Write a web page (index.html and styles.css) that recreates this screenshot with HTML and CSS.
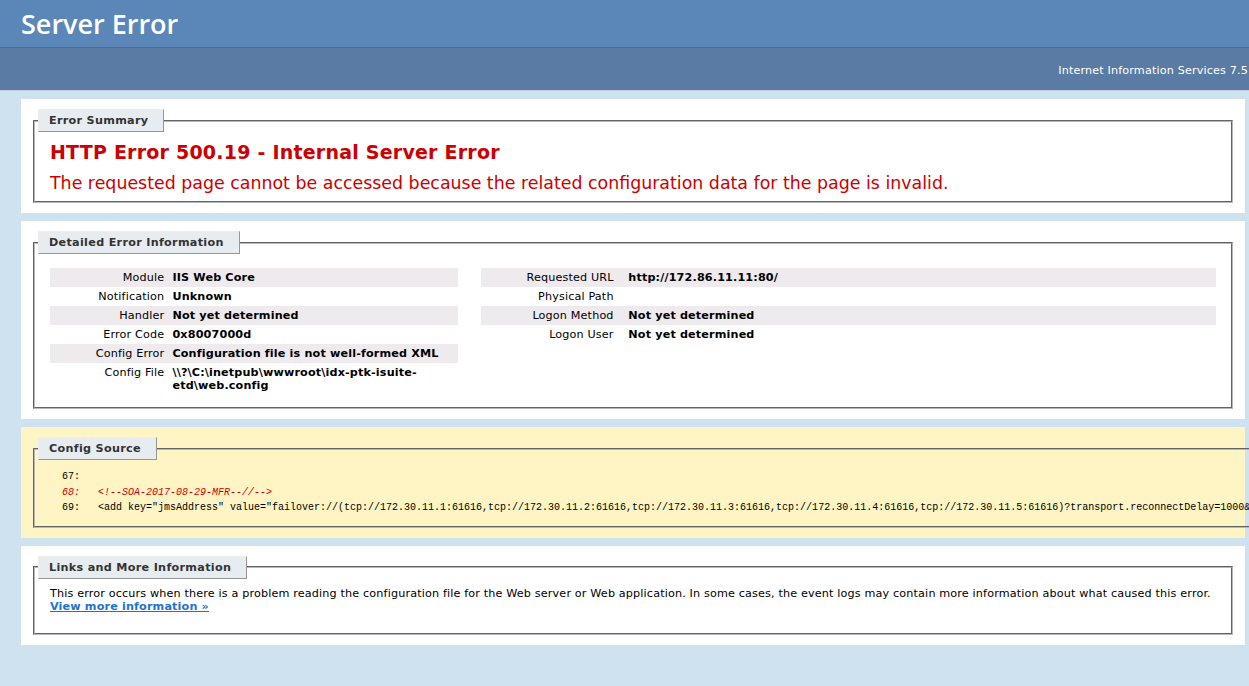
FILE: index.html
```html
<!DOCTYPE html>
<html lang="en">
<head>
<meta charset="utf-8">
<title>IIS 7.5 Detailed Error - 500.19 - Internal Server Error</title>
<link rel="stylesheet" href="styles.css">
</head>
<body>
<div class="header"><h1 class="title">Server Error</h1></div>
<div class="server-version"><p>Internet Information Services 7.5</p></div>
<div class="content">
  <div class="container summary">
    <fieldset class="box">
      <legend class="legend">Error Summary</legend>
      <h2 class="err-title">HTTP Error 500.19 - Internal Server Error</h2>
      <h3 class="err-sub">The requested page cannot be accessed because the related configuration data for the page is invalid.</h3>
    </fieldset>
  </div>

  <div class="container">
    <fieldset class="box">
      <legend class="legend">Detailed Error Information</legend>
      <div class="details">
        <div class="details-left">
          <table class="info">
            <tr class="alt"><th>Module</th><td>IIS Web Core</td></tr>
            <tr><th>Notification</th><td>Unknown</td></tr>
            <tr class="alt"><th>Handler</th><td>Not yet determined</td></tr>
            <tr><th>Error Code</th><td>0x8007000d</td></tr>
            <tr class="alt"><th>Config Error</th><td>Configuration file is not well-formed XML</td></tr>
            <tr><th>Config File</th><td>\\?\C:\inetpub\wwwroot\idx-ptk-isuite-etd\web.config</td></tr>
          </table>
        </div>
        <div class="details-right">
          <table class="info">
            <tr class="alt"><th>Requested URL</th><td>http://172.86.11.11:80/</td></tr>
            <tr><th>Physical Path</th><td></td></tr>
            <tr class="alt"><th>Logon Method</th><td>Not yet determined</td></tr>
            <tr><th>Logon User</th><td>Not yet determined</td></tr>
          </table>
        </div>
      </div>
    </fieldset>
  </div>

  <div class="container config-source">
    <fieldset class="box">
      <legend class="legend">Config Source</legend>
<pre class="code">  67:   
<span class="err-line">  68:   &lt;!--SOA-2017-08-29-MFR--//--&gt;</span>
  69:   &lt;add key="jmsAddress" value="failover://(tcp://172.30.11.1:61616,tcp://172.30.11.2:61616,tcp://172.30.11.3:61616,tcp://172.30.11.4:61616,tcp://172.30.11.5:61616)?transport.reconnectDelay=1000&amp;</pre>
    </fieldset>
  </div>

  <div class="container">
    <fieldset class="box">
      <legend class="legend">Links and More Information</legend>
      This error occurs when there is a problem reading the configuration file for the Web server or Web application. In some cases, the event logs may contain more information about what caused this error.
      <p class="more"><a class="link" href="#">View more information &raquo;</a></p>
    </fieldset>
  </div>
</div>
</body>
</html>
```

FILE: styles.css
```css
html {
  overflow-x: hidden;
}

body {
  margin: 0;
  font-family: "DejaVu Sans", Verdana, sans-serif;
  font-size: 11.2px;
  line-height: 13px;
  letter-spacing: 0.15px;
  color: #000;
  background: #cfe2ef;
}

.header {
  padding: 6px 21px;
  background: #5b87b8;
  color: #fff;
}

.title {
  margin: 0;
  font-family: "Open Sans", "DejaVu Sans", sans-serif;
  font-size: 27px;
  font-weight: 600;
  line-height: 35px;
  letter-spacing: 0;
  color: #fff;
}

.server-version {
  margin: 0 0 5px 0;
  padding: 11px 1px 8px 0;
  background: #5a7ba3;
  border-top: 1px solid #4a6c8e;
  border-bottom: 1px solid #c1cfdd;
  color: #fff;
  text-align: right;
}

.server-version p {
  margin: 5px 0;
}

.content {
  margin-left: 21px;
}

.container {
  width: 1204px;
  margin-top: 8px;
  padding: 10px;
  background: #fff;
}

.config-source {
  background: #fff5c4;
}

.box {
  margin: 0 2px;
  padding: 0 15px 10px 15px;
  border: 2px groove #b8b8b8;
}

.summary .box {
  padding-bottom: 8px;
}

.legend {
  padding: 4px 15px 4px 10px;
  margin: 4px 0 8px -12px;
  border-top: 1px solid #ededed;
  border-left: 1px solid #ededed;
  border-right: 1px solid #969696;
  border-bottom: 1px solid #969696;
  background: #e7ecf0;
  color: #333;
  font-weight: bold;
  line-height: 13px;
  letter-spacing: 0.3px;
}

.summary .legend {
  margin-bottom: 9px;
}

.err-title {
  margin: 0;
  font-size: 19px;
  line-height: 22px;
  letter-spacing: 0.22px;
  color: #cc0000;
}

.err-sub {
  margin: 10px 0 0 0;
  font-size: 17.4px;
  line-height: 20px;
  letter-spacing: 0;
  font-weight: normal;
  color: #cc0000;
}

.details {
  display: flex;
  align-items: flex-start;
}

.details-left {
  width: 35%;
  margin-right: 2%;
}

.details-right {
  width: 63%;
}

.info {
  width: 100%;
  margin: 6px 0 2px 0;
  border-collapse: collapse;
  table-layout: fixed;
}

.info th,
.info td {
  vertical-align: top;
  padding: 3px 0;
  text-align: left;
  border: none;
}

.info th {
  width: 30%;
  padding-right: 2%;
  text-align: right;
  font-weight: normal;
}

.details-right .info th {
  width: 20%;
}

.info td {
  font-weight: bold;
}

.info tr.alt th,
.info tr.alt td {
  background: #eeeaee;
}

.code {
  margin: 1px 0 0 0;
  font-family: "Liberation Mono", "Courier New", monospace;
  font-size: 10px;
  line-height: 15.5px;
  letter-spacing: 0;
  color: #000;
}

.err-line {
  color: #cc0000;
  font-style: italic;
}

.more {
  margin: 0 0 10px 0;
}

.link {
  color: #1e73d2;
  font-weight: bold;
}
```
